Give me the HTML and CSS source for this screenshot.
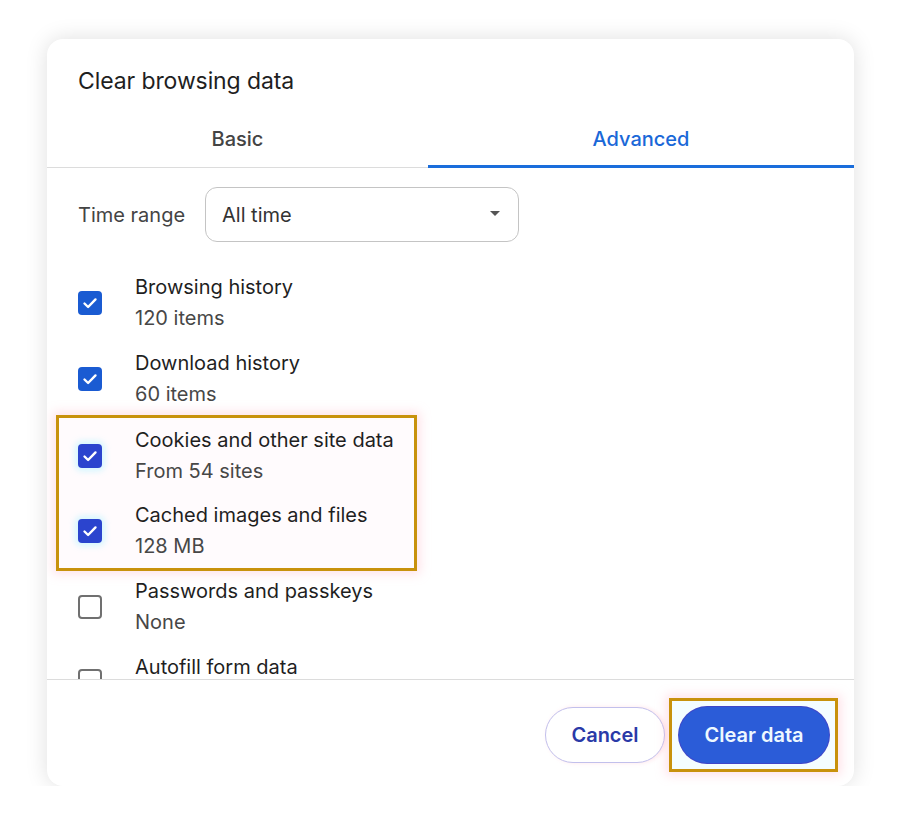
FILE: index.html
```html
<!DOCTYPE html>
<html lang="en">
<head>
    <meta charset="UTF-8">
    <title>Clear browsing data</title>
    <link rel="stylesheet" href="styles.css">
</head>
<body>
<div class="dialog">
    <div class="title">Clear browsing data</div>
    <div class="tabs">
        <div class="tab tab-basic">Basic</div>
        <div class="tab tab-advanced active">Advanced</div>
    </div>
    <div class="content">
        <div class="range">
            <span class="range-label">Time range</span>
            <div class="select">
                <span>All time</span>
                <span class="arrow"></span>
            </div>
        </div>

        <div class="row">
            <span class="box checked"><svg viewBox="0 0 24 24"><path d="M6.5 12.5l3.6 3.5 7.4-7.6"/></svg></span>
            <div class="text">
                <p class="label">Browsing history</p>
                <p class="sub">120 items</p>
            </div>
        </div>
        <div class="row">
            <span class="box checked"><svg viewBox="0 0 24 24"><path d="M6.5 12.5l3.6 3.5 7.4-7.6"/></svg></span>
            <div class="text">
                <p class="label">Download history</p>
                <p class="sub">60 items</p>
            </div>
        </div>

        <div class="mark">
            <div class="row">
                <span class="box checked alt"><svg viewBox="0 0 24 24"><path d="M6.5 12.5l3.6 3.5 7.4-7.6"/></svg></span>
                <div class="text">
                    <p class="label">Cookies and other site data</p>
                    <p class="sub">From 54 sites</p>
                </div>
            </div>
            <div class="row">
                <span class="box checked alt"><svg viewBox="0 0 24 24"><path d="M6.5 12.5l3.6 3.5 7.4-7.6"/></svg></span>
                <div class="text">
                    <p class="label">Cached images and files</p>
                    <p class="sub">128 MB</p>
                </div>
            </div>
        </div>

        <div class="row">
            <span class="box"></span>
            <div class="text">
                <p class="label">Passwords and passkeys</p>
                <p class="sub">None</p>
            </div>
        </div>
        <div class="row row-last">
            <span class="box"></span>
            <div class="text">
                <p class="label">Autofill form data</p>
            </div>
        </div>
    </div>
    <div class="footer">
        <button class="btn btn-cancel">Cancel</button>
        <span class="mark-btn"><button class="btn btn-clear">Clear data</button></span>
    </div>
</div>
</body>
</html>
```

FILE: styles.css
```css
body {
    margin: 0;
    background: #fff;
    font-family: Inter, "Noto Sans", sans-serif;
    color: #1f1f1f;
}
.dialog {
    width: 807px;
    height: 747px;
    margin: 39px 0 0 47px;
    background: #fff;
    border-radius: 16px;
    box-shadow: 0 0 22px rgba(0,0,0,0.13);
    display: flex;
    flex-direction: column;
    overflow: hidden;
}
.title {
    padding: 27px 31px 0;
    font-size: 23px;
    line-height: 30px;
    letter-spacing: -0.1px;
}
.tabs {
    display: flex;
    margin-top: 17px;
    border-bottom: 1px solid #dcdcdc;
}
.tab {
    height: 52px;
    line-height: 52px;
    text-align: center;
    font-size: 20px;
    font-weight: 500;
    color: #444;
    border-bottom: 3px solid transparent;
    margin-bottom: -1px;
}
.tab-basic {
    flex: 381;
}
.tab-advanced {
    flex: 426;
}
.tab.active {
    color: #1a68d8;
    border-bottom-color: #1a6ddb;
}
.content {
    height: 512px;
    box-sizing: border-box;
    flex-shrink: 0;
    overflow: hidden;
    padding: 19px 31px 0;
    border-bottom: 1px solid #dcdcdc;
}
.range {
    display: flex;
    align-items: center;
}
.range-label {
    width: 127px;
    font-size: 20px;
    color: #444;
}
.select {
    width: 314px;
    height: 55px;
    box-sizing: border-box;
    border: 1.5px solid #c4c4c4;
    border-radius: 12px;
    display: flex;
    align-items: center;
    justify-content: space-between;
    padding: 0 18px 0 16px;
    font-size: 20px;
    color: #333;
}
.arrow {
    width: 0;
    height: 0;
    border-left: 5.5px solid transparent;
    border-right: 5.5px solid transparent;
    border-top: 5.5px solid #555;
    margin-bottom: 3px;
}
.range + .row {
    margin-top: 23px;
}
.row {
    display: flex;
    align-items: center;
    height: 76px;
}
.row-last {
    align-items: flex-start;
    padding-top: 7px;
}
.row-last .box {
    margin-top: 17px;
}
.box {
    width: 24px;
    height: 24px;
    box-sizing: border-box;
    border: 2.5px solid #707070;
    border-radius: 4px;
    margin-right: 33px;
    flex-shrink: 0;
}
.box.checked {
    border: none;
    background: #1a5bd2;
}
.box.alt {
    background: #2b44ce;
    box-shadow: 0 0 6px 3px rgba(200,245,255,0.8);
}
.box svg {
    display: block;
    width: 24px;
    height: 24px;
    fill: none;
    stroke: #fff;
    stroke-width: 2.4;
    stroke-linecap: round;
    stroke-linejoin: round;
}
.text p {
    margin: 0;
    font-size: 20px;
    line-height: 31px;
}
.label {
    color: #1f1f1f;
}
.sub {
    color: #474747;
}
.mark {
    width: 361px;
    box-sizing: border-box;
    margin: -2px 0 -2px -22px;
    padding: 0 0 0 19px;
    border: 3px solid #c8920c;
    background: #fffbfd;
    box-shadow: 0 0 10px 3px rgba(255,170,190,0.35);
}
.mark .row {
    height: 75px;
}
.footer {
    flex: 1;
    display: flex;
    justify-content: flex-end;
    align-items: flex-start;
    padding: 27px 16px 0 0;
    gap: 4px;
}
.btn {
    height: 56px;
    border-radius: 28px;
    font-family: Inter, "Noto Sans", sans-serif;
    font-size: 20px;
    font-weight: 600;
    outline: none;
    cursor: pointer;
}
.btn-cancel {
    width: 120px;
    background: #fff;
    color: #2a3aa8;
    border: 1.5px solid #c2c0ec;
    box-shadow: 2px 0 4px rgba(255,170,190,0.3);
}
.mark-btn {
    display: block;
    margin-top: -9px;
    padding: 6px 6px 6px 7px;
    border: 3px solid #c8920c;
    background: #f4fdff;
    box-shadow: 0 0 10px 3px rgba(255,170,190,0.35);
}
.btn-clear {
    display: block;
    width: 150px;
    background: #2b5cd8;
    color: #eef8ff;
    border: none;
    box-shadow: 0 0 0 1px #3f46c8;
}
```
